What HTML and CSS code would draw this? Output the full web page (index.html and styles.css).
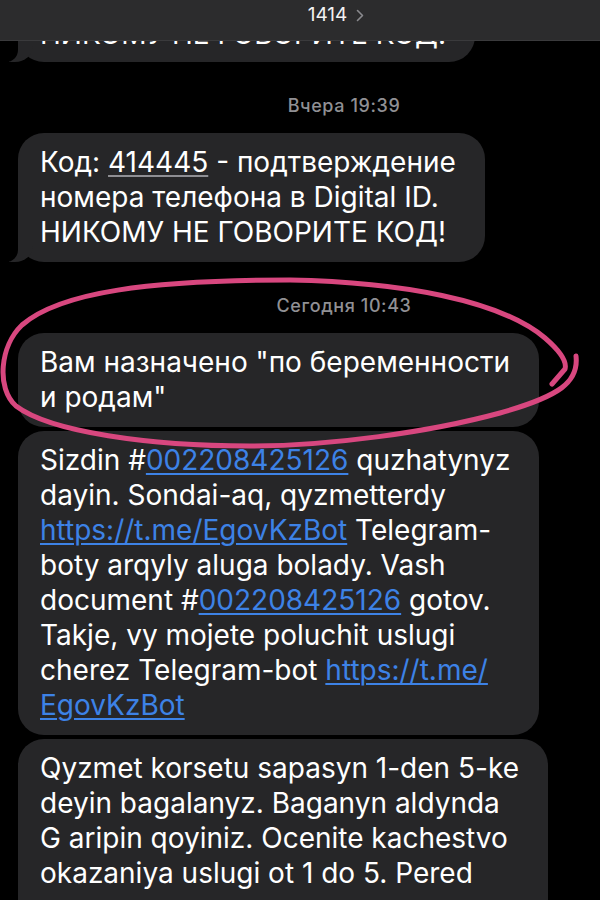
FILE: index.html
```html
<!DOCTYPE html>
<html lang="ru">
<head>
<meta charset="utf-8">
<title>1414</title>
<link rel="stylesheet" href="styles.css">
</head>
<body>
<div class="screen">
  <header class="topbar">
    <span class="sender">1414</span>
    <svg class="chev" width="8" height="13" viewBox="0 0 8 13"><path d="M1.5 1.5 L6.5 6.5 L1.5 11.5" fill="none" stroke="#8a8a8e" stroke-width="1.6" stroke-linecap="round" stroke-linejoin="round"/></svg>
  </header>

  <div class="viewport">
    <main class="thread">
      <div class="bubble tail first">
        <div class="line">НИКОМУ НЕ ГОВОРИТЕ КОД!</div>
      </div>

      <div class="stamp">Вчера 19:39</div>

      <div class="bubble tail">
        <div class="line">Код: <span class="code">414445</span> - подтверждение</div>
        <div class="line">номера телефона в Digital ID.</div>
        <div class="line">НИКОМУ НЕ ГОВОРИТЕ КОД!</div>
      </div>

      <div class="stamp">Сегодня 10:43</div>

      <div class="bubble">
        <div class="line">Вам назначено "по беременности</div>
        <div class="line">и родам"</div>
      </div>

      <div class="bubble">
        <div class="line">Sizdin #<a class="link">002208425126</a> quzhatynyz</div>
        <div class="line">dayin. Sondai-aq, qyzmetterdy</div>
        <div class="line"><a class="link">https://t.me/EgovKzBot</a> Telegram-</div>
        <div class="line">boty arqyly aluga bolady. Vash</div>
        <div class="line">document #<a class="link">002208425126</a> gotov.</div>
        <div class="line">Takje, vy mojete poluchit uslugi</div>
        <div class="line">cherez Telegram-bot <a class="link">https://t.me/</a></div>
        <div class="line"><a class="link">EgovKzBot</a></div>
      </div>

      <div class="bubble last">
        <div class="line">Qyzmet korsetu sapasyn 1-den 5-ke</div>
        <div class="line">deyin bagalanyz. Baganyn aldynda</div>
        <div class="line">G aripin qoyiniz. Ocenite kachestvo</div>
        <div class="line">okazaniya uslugi ot 1 do 5. Pered</div>
      </div>
    </main>
  </div>

  <svg class="scribble" width="600" height="900" viewBox="0 0 600 900">
    <path d="M576 356 C579 382 560 396 500 413 C430 432 330 446 250 446 C150 446 50 432 16 406 C-4 388 0 346 22 325 C60 292 150 280 290 280 C400 282 500 300 545 338 C560 351 567 362 565 369 L552 384" fill="none" stroke="#d8477f" stroke-width="5" stroke-linecap="round" stroke-linejoin="round"/>
  </svg>
</div>
</body>
</html>
```

FILE: styles.css
```css
html, body {
  margin: 0;
  padding: 0;
  background: #000;
}

body {
  font-family: Inter, "Noto Sans", "DejaVu Sans", sans-serif;
  color: #fff;
  overflow: hidden;
}

.screen {
  position: relative;
  width: 600px;
  height: 900px;
  overflow: hidden;
  background: #000;
  display: flex;
  flex-direction: column;
}

.topbar {
  flex: none;
  height: 41px;
  background: #2c2c2d;
  border-bottom: 1px solid #3a3a3c;
  display: flex;
  align-items: center;
  justify-content: center;
  gap: 9px;
  padding-left: 72px;
  padding-bottom: 11px;
  box-sizing: border-box;
}

.sender {
  font-size: 19px;
  line-height: 22px;
  color: #f2f2f2;
}

.chev {
  display: block;
  margin-top: 1px;
}

.viewport {
  flex: 1;
  overflow: hidden;
}

.thread {
  display: flex;
  flex-direction: column;
  align-items: flex-start;
  gap: 4px;
  padding-left: 18px;
  margin-top: -38px;
}

.bubble {
  position: relative;
  background: #262628;
  border-radius: 26px;
  padding: 12px 29px 12px 22px;
  font-size: 28px;
  line-height: 35px;
  letter-spacing: 0;
}

.bubble.first {
  padding-top: 14px;
  padding-bottom: 10px;
}

.line {
  white-space: nowrap;
}

.bubble.tail::before {
  content: "";
  position: absolute;
  bottom: 0;
  left: -9px;
  width: 24px;
  height: 26px;
  background: #262628;
  border-bottom-right-radius: 18px 16px;
  z-index: 0;
}

.bubble.tail::after {
  content: "";
  position: absolute;
  bottom: 0;
  left: -28px;
  width: 28px;
  height: 28px;
  background: #000;
  border-bottom-right-radius: 12px;
  z-index: 1;
}

.bubble .line {
  position: relative;
  z-index: 2;
}

.code {
  text-decoration: underline;
  text-decoration-color: #8e8e93;
  text-decoration-thickness: 1.5px;
  text-underline-offset: 3px;
}

.link {
  color: #3d82e6;
  text-decoration: underline;
  text-decoration-thickness: 1.5px;
  text-underline-offset: 3px;
}

.bubble.last {
  padding-bottom: 60px;
}

.stamp {
  align-self: stretch;
  text-align: center;
  font-size: 18px;
  line-height: 22px;
  font-weight: 500;
  letter-spacing: 0.6px;
  color: #909094;
  padding-left: 70px;
  margin-top: 29px;
  margin-bottom: 12px;
}

.scribble {
  position: absolute;
  top: 0;
  left: 0;
  pointer-events: none;
}
```
